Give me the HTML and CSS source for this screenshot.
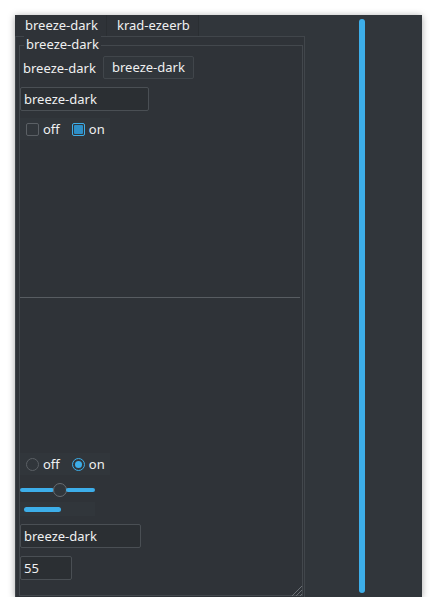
FILE: index.html
```html
<!DOCTYPE html>
<html>
<head>
<meta charset="utf-8">
<link rel="stylesheet" href="styles.css">
</head>
<body>
<div class="window">
  <div class="left">
    <div class="tabs">
      <div class="tab active">breeze-dark</div>
      <div class="tab">krad-ezeerb</div>
    </div>
    <div class="pane">
      <div class="group">
        <div class="group-title">breeze-dark</div>
        <div class="row1">
          <span class="label">breeze-dark</span>
          <div class="button">breeze-dark</div>
        </div>
        <div class="edit edit-wide">breeze-dark</div>
        <div class="choice-row">
          <span class="check"></span><span class="choice-text">off</span>
          <span class="check checked"><span class="check-fill"></span></span><span class="choice-text">on</span>
        </div>
        <div class="spacer"></div>
        <div class="hline"></div>
        <div class="spacer"></div>
        <div class="choice-row">
          <span class="radio"></span><span class="choice-text">off</span>
          <span class="radio checked"><span class="radio-dot"></span></span><span class="choice-text">on</span>
        </div>
        <div class="slider">
          <div class="track track-left"></div>
          <div class="handle"></div>
          <div class="track"></div>
        </div>
        <div class="progress"><div class="progress-bar"></div></div>
        <div class="edit edit-mid">breeze-dark</div>
        <div class="edit edit-spin">55</div>
      </div>
      <svg class="grip" width="14" height="14" viewBox="0 0 14 14">
        <line x1="13" y1="3" x2="3" y2="13" stroke="#6b7075" stroke-width="1"/>
        <line x1="13" y1="7" x2="7" y2="13" stroke="#6b7075" stroke-width="1"/>
        <line x1="13" y1="11" x2="11" y2="13" stroke="#6b7075" stroke-width="1"/>
      </svg>
    </div>
  </div>
  <div class="right">
    <div class="vbar"></div>
  </div>
</div>
</body>
</html>
```
FILE: styles.css
```css
html, body {
  margin: 0;
  padding: 0;
  background: #ffffff;
}
body {
  font-family: "Noto Sans", "DejaVu Sans", sans-serif;
  font-size: 13px;
  color: #eff0f1;
}
.window {
  margin: 15px 0 0 15px;
  width: 407px;
  height: 582px;
  background: #31363b;
  box-shadow: 0 1px 7px rgba(0, 0, 0, 0.35);
  display: flex;
}
.left {
  width: 290px;
  display: flex;
  flex-direction: column;
}
.tabs {
  height: 21px;
  display: flex;
}
.tab {
  flex-shrink: 0;
  white-space: nowrap;
  height: 21px;
  line-height: 20px;
  padding: 0 0 0 10px;
  box-sizing: border-box;
  border-right: 1px solid #2a2e32;
  background: #2f3338;
  width: 92px;
}
.tab.active {
  width: 92px;
}
.pane {
  position: relative;
  flex: 1;
  border: 1px solid #41464b;
  border-bottom: none;
  background: #2f3338;
  padding: 8px 1px 1px 3px;
  display: flex;
  flex-direction: column;
}
.group {
  position: relative;
  flex: 1;
  border: 1px solid #43484d;
  display: flex;
  flex-direction: column;
  padding-bottom: 15px;
}
.group-title {
  position: absolute;
  left: 4px;
  top: -11px;
  padding: 0 2px;
  line-height: 18px;
  white-space: nowrap;
  background: #2f3338;
}
.row1 {
  margin-top: 10px;
  height: 23px;
  display: flex;
  align-items: center;
}
.label {
  padding-left: 3px;
  width: 80px;
  flex-shrink: 0;
  white-space: nowrap;
}
.button {
  flex-shrink: 0;
  white-space: nowrap;
  width: 91px;
  height: 23px;
  box-sizing: border-box;
  border: 1px solid #41464b;
  border-radius: 2px;
  line-height: 21px;
  padding-left: 8px;
  background: #31363b;
}
.edit {
  height: 24px;
  box-sizing: border-box;
  border: 1px solid #4a4f54;
  border-radius: 2px;
  line-height: 22px;
  padding-left: 3px;
  background: #2b2f33;
  white-space: nowrap;
}
.edit-wide {
  margin-top: 8px;
  width: 129px;
}
.edit-mid {
  margin-top: 8px;
  width: 121px;
}
.edit-spin {
  margin-top: 8px;
  width: 52px;
}
.choice-row {
  margin-top: 7px;
  width: 90px;
  height: 22px;
  background: #31363b;
  display: flex;
  align-items: center;
  padding-left: 6px;
  box-sizing: border-box;
}
.check {
  flex-shrink: 0;
  width: 13px;
  height: 13px;
  box-sizing: border-box;
  border: 1px solid #5b6065;
  border-radius: 2px;
  display: flex;
  align-items: center;
  justify-content: center;
}
.check.checked {
  border-color: #3daee9;
}
.check-fill {
  width: 9px;
  height: 9px;
  background: #2e8fc7;
  border-radius: 1px;
}
.choice-text {
  flex-shrink: 0;
  margin-left: 4px;
  margin-right: 12px;
  line-height: 22px;
}
.radio {
  flex-shrink: 0;
  width: 13px;
  height: 13px;
  box-sizing: border-box;
  border: 1px solid #5b6065;
  border-radius: 50%;
  display: flex;
  align-items: center;
  justify-content: center;
}
.radio.checked {
  border-color: #3daee9;
}
.radio-dot {
  width: 7px;
  height: 7px;
  background: #3daee9;
  border-radius: 50%;
}
.spacer {
  flex: 1;
}
.hline {
  height: 1px;
  background: #585d62;
  margin: 8px 2px 0 0;
}
.slider {
  margin-top: 8px;
  width: 75px;
  height: 14px;
  display: flex;
  align-items: center;
}
.track {
  flex: 1;
  height: 4px;
  background: #3daee9;
  border-radius: 2px;
}
.track-left {
  flex: none;
  width: 34px;
}
.handle {
  flex-shrink: 0;
  width: 14px;
  height: 14px;
  box-sizing: border-box;
  border: 1px solid #686d72;
  border-radius: 50%;
  background: #31363b;
  margin: 0 -1px;
}
.progress {
  margin-top: 5px;
  width: 75px;
  height: 14px;
  background: #31363b;
  display: flex;
  align-items: center;
  padding-left: 4px;
  box-sizing: border-box;
}
.progress-bar {
  width: 37px;
  height: 5px;
  background: #3daee9;
  border-radius: 3px;
}
.grip {
  position: absolute;
  right: 1px;
  bottom: 0;
}
.right {
  flex: 1;
  padding: 4px 0 4px 54px;
  display: flex;
}
.vbar {
  width: 6px;
  background: #3daee9;
  border-radius: 3px;
}
```
